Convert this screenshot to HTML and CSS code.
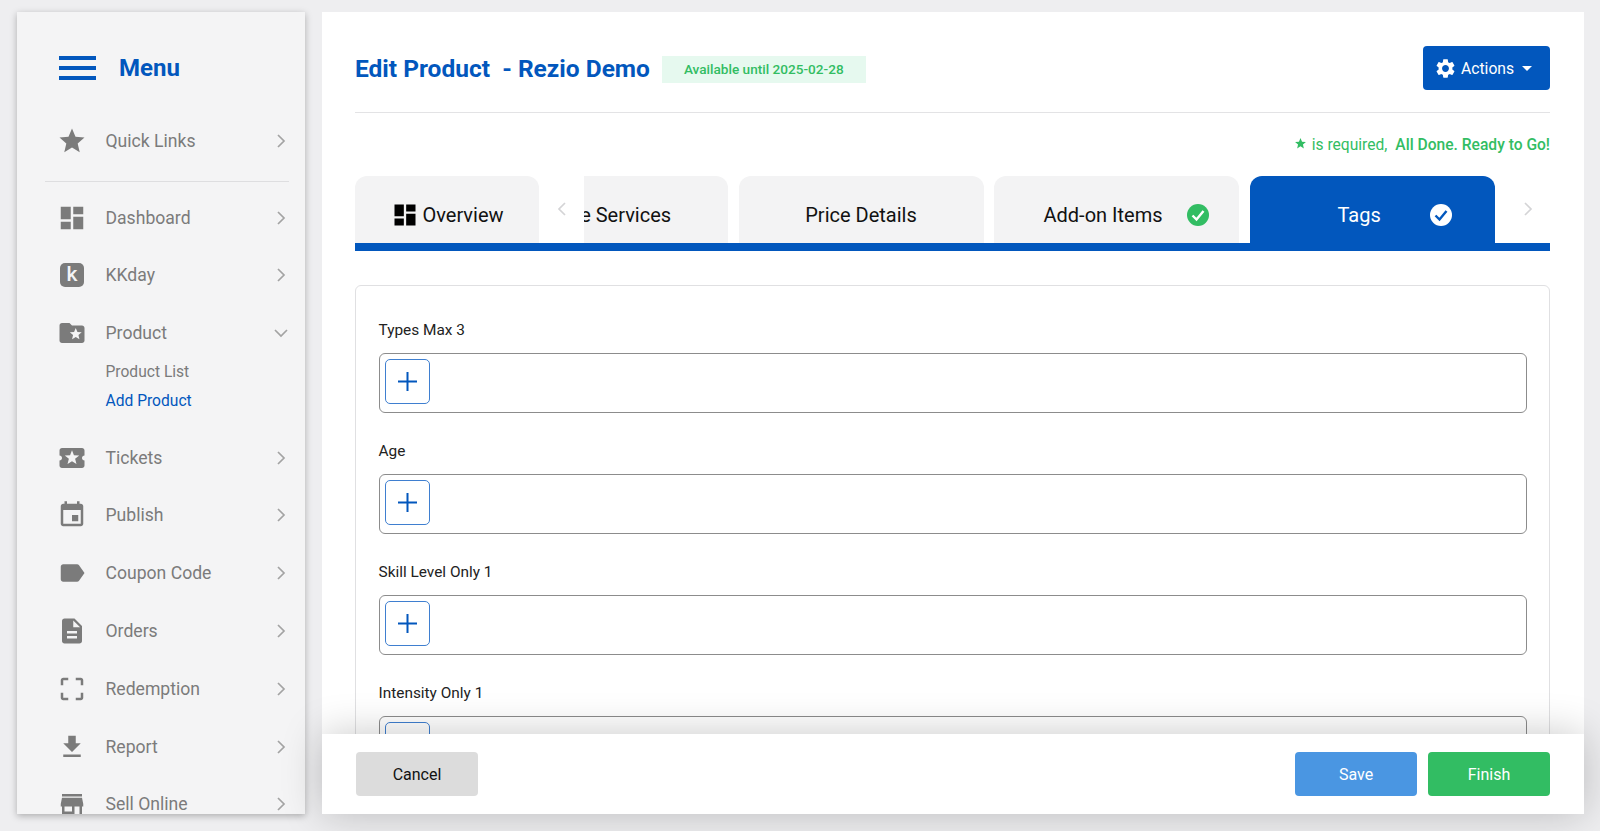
FILE: index.html
```html
<!DOCTYPE html>
<html lang="en">
<head>
<meta charset="utf-8">
<title>Edit Product - Rezio Demo</title>
<link rel="stylesheet" href="styles.css">
</head>
<body>
<svg class="defs" aria-hidden="true">
  <symbol id="i-star" viewBox="0 0 24 24"><path d="M12 17.27L18.18 21l-1.64-7.03L22 9.24l-7.19-.61L12 2 9.19 8.63 2 9.24l5.46 4.73L5.82 21z"/></symbol>
  <symbol id="i-dash" viewBox="0 0 24 24"><path d="M3 13h8V3H3v10zm0 8h8v-6H3v6zm10 0h8V11h-8v10zm0-18v6h8V3h-8z"/></symbol>
  <symbol id="i-folder" viewBox="0 0 24 24"><path d="M20 6h-8l-2-2H4c-1.1 0-1.99.9-1.99 2L2 18c0 1.1.9 2 2 2h16c1.1 0 2-.9 2-2V8c0-1.1-.9-2-2-2zm-2.06 11L15 15.28 12.06 17l.78-3.33-2.59-2.24 3.41-.29L15 8l1.34 3.14 3.41.29-2.59 2.24.78 3.33z"/></symbol>
  <symbol id="i-ticket" viewBox="0 0 24 24"><path d="M20 12c0-1.1.9-2 2-2V6c0-1.1-.9-2-2-2H4c-1.1 0-1.99.9-1.99 2v4c1.1 0 1.99.9 1.99 2s-.89 2-2 2v4c0 1.1.9 2 2 2h16c1.1 0 2-.9 2-2v-4c-1.1 0-2-.9-2-2zm-4.42 4.8L12 14.5l-3.58 2.3 1.08-4.12-3.29-2.69 4.24-.25L12 5.8l1.54 3.95 4.24.25-3.29 2.69 1.09 4.11z"/></symbol>
  <symbol id="i-event" viewBox="0 0 24 24"><path d="M17 12h-5v5h5v-5zM16 1v2H8V1H6v2H5c-1.11 0-1.99.9-1.99 2L3 19c0 1.1.89 2 2 2h14c1.1 0 2-.9 2-2V5c0-1.1-.9-2-2-2h-1V1h-2zm3 18H5V8h14v11z"/></symbol>
  <symbol id="i-label" viewBox="0 0 24 24"><path d="M17.63 5.84C17.27 5.33 16.67 5 16 5L5 5.01C3.9 5.01 3 5.9 3 7v10c0 1.1.9 1.99 2 1.99L16 19c.67 0 1.27-.33 1.63-.84L22 12l-4.37-6.16z"/></symbol>
  <symbol id="i-doc" viewBox="0 0 24 24"><path d="M14 2H6c-1.1 0-1.99.9-1.99 2L4 20c0 1.1.89 2 1.99 2H18c1.1 0 2-.9 2-2V8l-6-6zm2 16H8v-2h8v2zm0-4H8v-2h8v2zm-3-5V3.5L18.5 9H13z"/></symbol>
  <symbol id="i-crop" viewBox="0 0 24 24"><path d="M3 5v4h2V5h4V3H5c-1.1 0-2 .9-2 2zm2 10H3v4c0 1.1.9 2 2 2h4v-2H5v-4zm14 4h-4v2h4c1.1 0 2-.9 2-2v-4h-2v4zm0-16h-4v2h4v4h2V5c0-1.1-.9-2-2-2z"/></symbol>
  <symbol id="i-down" viewBox="0 0 24 24"><path d="M19 9h-4V3H9v6H5l7 7 7-7zM5 18v2h14v-2H5z"/></symbol>
  <symbol id="i-store" viewBox="0 0 24 24"><path d="M20 4H4v2h16V4zm1 10v-2l-1-5H4l-1 5v2h1v6h10v-6h4v6h2v-6h1zm-9 4H6v-4h6v4z"/></symbol>
  <symbol id="i-gear" viewBox="0 0 24 24"><path d="M19.14 12.94c.04-.3.06-.61.06-.94 0-.32-.02-.64-.07-.94l2.03-1.58c.18-.14.23-.41.12-.61l-1.92-3.32c-.12-.22-.37-.29-.59-.22l-2.39.96c-.5-.38-1.03-.7-1.62-.94l-.36-2.54c-.04-.24-.24-.41-.48-.41h-3.84c-.24 0-.43.17-.47.41l-.36 2.54c-.59.24-1.13.57-1.62.94l-2.39-.96c-.22-.08-.47 0-.59.22L2.74 8.87c-.12.21-.08.47.12.61l2.03 1.58c-.05.3-.09.63-.09.94s.02.64.07.94l-2.03 1.58c-.18.14-.23.41-.12.61l1.92 3.32c.12.22.37.29.59.22l2.39-.96c.5.38 1.03.7 1.62.94l.36 2.54c.05.24.24.41.48.41h3.84c.24 0 .44-.17.47-.41l.36-2.54c.59-.24 1.13-.56 1.62-.94l2.39.96c.22.08.47 0 .59-.22l1.92-3.32c.12-.22.07-.47-.12-.61l-2.01-1.58zM12 15.6c-1.98 0-3.6-1.62-3.6-3.6s1.62-3.6 3.6-3.6 3.6 1.62 3.6 3.6-1.62 3.6-3.6 3.6z"/></symbol>
  <symbol id="i-right" viewBox="0 0 10 16"><path d="M2 2l6 6-6 6" fill="none" stroke="currentColor" stroke-width="1.7"/></symbol>
  <symbol id="i-left" viewBox="0 0 10 16"><path d="M8 2L2 8l6 6" fill="none" stroke="currentColor" stroke-width="1.7"/></symbol>
  <symbol id="i-open" viewBox="0 0 16 10"><path d="M2 2l6 6 6-6" fill="none" stroke="currentColor" stroke-width="1.7"/></symbol>
  <symbol id="i-plus" viewBox="0 0 19 19"><path d="M9.5 0v19M0 9.5h19" fill="none" stroke="currentColor" stroke-width="2"/></symbol>
</svg>

<aside class="sidebar">
  <div class="menu-head">
    <div class="burger"><span></span><span></span><span></span></div>
    <div class="menu-title">Menu</div>
  </div>
  <div class="row"><svg class="ico"><use href="#i-star"/></svg><span class="row-text">Quick Links</span><svg class="chev"><use href="#i-right"/></svg></div>
  <div class="side-rule"></div>
  <div class="row"><svg class="ico"><use href="#i-dash"/></svg><span class="row-text">Dashboard</span><svg class="chev"><use href="#i-right"/></svg></div>
  <div class="row"><span class="ico-wrap"><span class="k-logo">k</span></span><span class="row-text">KKday</span><svg class="chev"><use href="#i-right"/></svg></div>
  <div class="row"><svg class="ico"><use href="#i-folder"/></svg><span class="row-text">Product</span><svg class="chev-open"><use href="#i-open"/></svg></div>
  <div class="sub">
    <div class="sub-item">Product List</div>
    <div class="sub-item sub-active">Add Product</div>
  </div>
  <div class="row"><svg class="ico"><use href="#i-ticket"/></svg><span class="row-text">Tickets</span><svg class="chev"><use href="#i-right"/></svg></div>
  <div class="row"><svg class="ico"><use href="#i-event"/></svg><span class="row-text">Publish</span><svg class="chev"><use href="#i-right"/></svg></div>
  <div class="row"><svg class="ico"><use href="#i-label"/></svg><span class="row-text">Coupon Code</span><svg class="chev"><use href="#i-right"/></svg></div>
  <div class="row"><svg class="ico"><use href="#i-doc"/></svg><span class="row-text">Orders</span><svg class="chev"><use href="#i-right"/></svg></div>
  <div class="row"><svg class="ico"><use href="#i-crop"/></svg><span class="row-text">Redemption</span><svg class="chev"><use href="#i-right"/></svg></div>
  <div class="row"><svg class="ico"><use href="#i-down"/></svg><span class="row-text">Report</span><svg class="chev"><use href="#i-right"/></svg></div>
  <div class="row"><svg class="ico"><use href="#i-store"/></svg><span class="row-text">Sell Online</span><svg class="chev"><use href="#i-right"/></svg></div>
</aside>

<main class="main">
  <div class="content">
    <header class="head">
      <h1 class="title">Edit Product&nbsp; - Rezio Demo</h1>
      <span class="badge">Available until 2025-02-28</span>
      <button class="actions"><svg class="gear"><use href="#i-gear"/></svg>Actions<span class="caret"></span></button>
    </header>
    <div class="required">
      <svg class="req-star"><use href="#i-star"/></svg>
      <span>is required,</span>
      <strong class="done">All Done. Ready to Go!</strong>
    </div>
    <nav class="tabbar">
      <div class="tab tab-fixed"><svg class="tab-ico"><use href="#i-dash"/></svg>Overview</div>
      <div class="tab-arrow"><svg class="arrow"><use href="#i-left"/></svg></div>
      <div class="tab-scroll">
        <div class="tab-track">
          <div class="tab tab-clipped">Time Services</div>
          <div class="tab">Price Details</div>
          <div class="tab tab-addon">Add-on Items
            <svg class="check" viewBox="0 0 22 22"><circle cx="11" cy="11" r="11" fill="#32bd63"/><path d="M5.5 11.5l4 4L16.5 7" fill="none" stroke="#fff" stroke-width="2.4"/></svg>
          </div>
          <div class="tab tab-active">Tags
            <svg class="check" viewBox="0 0 22 22"><circle cx="11" cy="11" r="11" fill="#fff"/><path d="M5.5 11.5l4 4L16.5 7" fill="none" stroke="#0257bd" stroke-width="2.4"/></svg>
          </div>
        </div>
      </div>
      <div class="tab-arrow"><svg class="arrow"><use href="#i-right"/></svg></div>
    </nav>
    <section class="card">
      <div class="field">
        <label class="field-label">Types Max 3</label>
        <div class="input"><button class="add"><svg class="plus"><use href="#i-plus"/></svg></button></div>
      </div>
      <div class="field">
        <label class="field-label">Age</label>
        <div class="input"><button class="add"><svg class="plus"><use href="#i-plus"/></svg></button></div>
      </div>
      <div class="field">
        <label class="field-label">Skill Level Only 1</label>
        <div class="input"><button class="add"><svg class="plus"><use href="#i-plus"/></svg></button></div>
      </div>
      <div class="field">
        <label class="field-label">Intensity Only 1</label>
        <div class="input"><button class="add"><svg class="plus"><use href="#i-plus"/></svg></button></div>
      </div>
    </section>
  </div>
  <footer class="foot">
    <button class="btn btn-cancel">Cancel</button>
    <div class="foot-right">
      <button class="btn btn-save">Save</button>
      <button class="btn btn-finish">Finish</button>
    </div>
  </footer>
</main>
</body>
</html>
```
FILE: styles.css
```css
* { box-sizing: border-box; }
html, body { margin: 0; height: 831px; overflow: hidden; }
body {
  display: flex;
  gap: 17px;
  padding: 12px 16px 17px 17px;
  background: #eeeef0;
  font-family: Roboto, "Liberation Sans", sans-serif;
  color: #111;
}
.defs { position: absolute; width: 0; height: 0; }

/* Sidebar */
.sidebar {
  width: 288px;
  flex: none;
  overflow: hidden;
  background: #f4f4f5;
  box-shadow: 0 2px 7px rgba(0, 0, 0, .28);
  color: #7b7b7b;
}
.menu-head {
  display: flex;
  align-items: center;
  gap: 23px;
  height: 100px;
  padding: 11px 0 0 42px;
}
.burger { display: flex; flex-direction: column; gap: 6px; width: 37px; }
.burger span { display: block; height: 4px; background: #0257bd; }
.menu-title { font-size: 24px; font-weight: 700; color: #0257bd; }
.row {
  display: flex;
  align-items: center;
  height: 57.8px;
  padding: 0 19px 0 40px;
}
.ico { width: 30px; height: 30px; flex: none; fill: #7b7b7b; }
.ico-wrap { width: 30px; height: 30px; flex: none; display: flex; align-items: center; justify-content: center; }
.k-logo {
  width: 24px;
  height: 24px;
  border-radius: 5px;
  background: #7b7b7b;
  color: #f4f4f5;
  font-size: 21px;
  font-weight: 500;
  line-height: 23px;
  text-align: center;
}
.row-text { flex: 1; margin-left: 18.5px; font-size: 17.6px; }
.chev { width: 10px; height: 16px; color: #a3a3a3; }
.chev-open { width: 16px; height: 10px; margin-right: -3px; color: #a3a3a3; }
.side-rule { height: 1px; margin: 11px 16px 7px 28px; background: #dedee0; }
.sub { margin: -4px 0 12.5px; padding-left: 88.5px; }
.sub-item { height: 29px; font-size: 15.6px; line-height: 29px; }
.sub-active { color: #0257bd; }

/* Main */
.main {
  flex: 1;
  display: flex;
  flex-direction: column;
  min-width: 0;
  background: #fff;
}
.content { flex: 1; min-height: 0; overflow: hidden; padding: 34px 34px 0 33px; }
.head {
  display: flex;
  align-items: center;
  height: 67px;
  padding-bottom: 22px;
  border-bottom: 1px solid #e3e3e5;
}
.title { margin: 0; font-size: 24.5px; font-weight: 700; color: #0257bd; white-space: pre; }
.badge {
  margin: 2px 0 0 12px;
  padding: 0 22px;
  height: 27px;
  background: #e6f9ef;
  color: #32bd63;
  font-size: 13.6px;
  font-weight: 500;
  line-height: 27px;
}
.actions {
  display: flex;
  align-items: center;
  margin-left: auto;
  width: 127px;
  height: 44px;
  padding: 0 0 0 12px;
  border: 0;
  border-radius: 4px;
  background: #0257bd;
  color: #fff;
  font: 400 15.7px Roboto, sans-serif;
}
.gear { width: 23px; height: 23px; margin: 0 4px 0 -1px; fill: #fff; }
.caret {
  margin-left: 8px;
  border: 5px solid transparent;
  border-top-color: #fff;
  border-bottom: 0;
}
.required {
  display: flex;
  justify-content: flex-end;
  align-items: center;
  height: 24px;
  margin-top: 20px;
  color: #32bd63;
  font-size: 15.6px;
}
.req-star { width: 13px; height: 13px; margin: -3px 5px 0 0; fill: #32bd63; }
.done { margin-left: 8px; font-weight: 500; }

/* Tabs */
.tabbar {
  display: flex;
  margin-top: 19px;
  height: 75px;
  border-bottom: 8px solid #0257bd;
}
.tab {
  flex: none;
  display: flex;
  align-items: center;
  justify-content: center;
  width: 245px;
  height: 67px;
  padding-top: 11px;
  border-radius: 12px 12px 0 0;
  background: #f3f3f4;
  color: #111;
  font-size: 20px;
}
.tab-fixed { width: 184px; padding-left: 1px; }
.tab-clipped { padding-left: 6px; }
.tab-ico { width: 28px; height: 28px; margin-right: 3px; fill: #000; }
.tab-arrow { flex: none; width: 45px; height: 67px; display: flex; align-items: center; justify-content: center; }
.arrow { width: 10px; height: 16px; margin-top: -1px; color: #d4d4d6; }
.tab-scroll { flex: 1; min-width: 0; overflow: hidden; }
.tab-track { display: flex; gap: 10.5px; margin-left: -101px; }
.check { width: 22px; height: 22px; flex: none; }
.tab-addon { justify-content: flex-start; padding-left: 49.5px; }
.tab-addon .check { margin-left: 24.5px; }
.tab-active {
  justify-content: flex-start;
  padding-left: 88px;
  background: #0257bd;
  color: #fff;
}
.tab-active .check { margin-left: 49px; }

/* Form */
.card {
  margin-top: 34px;
  padding: 32px 22px 0 22.5px;
  border: 1px solid #e0e0e2;
  border-radius: 6px;
}
.field { margin-bottom: 26.5px; }
.field-label { display: block; height: 24px; margin-bottom: 10.5px; font-size: 15.4px; line-height: 24px; color: #222; }
.input {
  height: 60px;
  padding: 5px;
  border: 1.5px solid #8c8c8c;
  border-radius: 6px;
}
.add {
  display: flex;
  align-items: center;
  justify-content: center;
  width: 45px;
  height: 45px;
  padding: 0;
  border: 1.5px solid #3f7fd0;
  border-radius: 5px;
  background: #fff;
}
.plus { width: 19px; height: 19px; color: #0257bd; }

/* Footer */
.foot {
  position: relative;
  z-index: 2;
  display: flex;
  flex: none;
  justify-content: space-between;
  align-items: flex-start;
  height: 80px;
  padding: 18px 34px 0;
  background: #fff;
  box-shadow: 0 0 40px rgba(0, 0, 0, .22);
}
.foot-right { display: flex; gap: 11px; }
.btn {
  width: 122px;
  height: 44px;
  border: 0;
  border-radius: 4px;
  font: 400 16px Roboto, sans-serif;
}
.btn-cancel { background: #dcdcdc; color: #111; }
.btn-save { background: #4a96e2; color: #fff; }
.btn-finish { background: #32bd63; color: #fff; }
```
